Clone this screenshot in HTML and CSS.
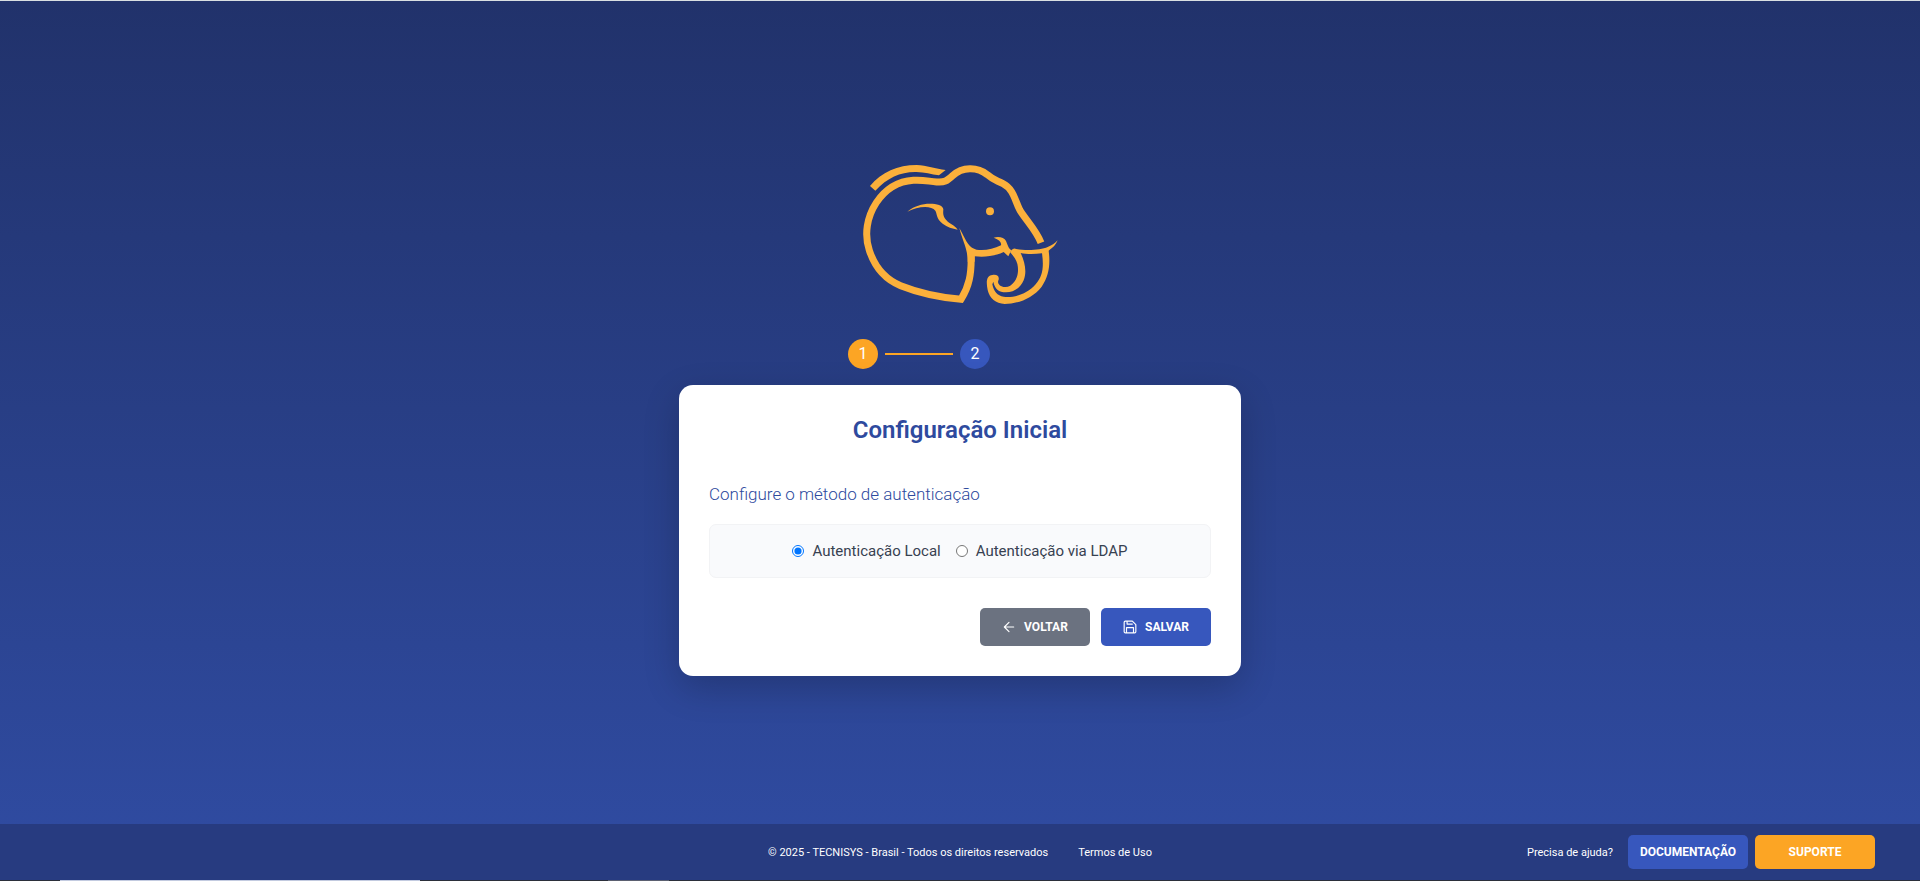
FILE: index.html
```
<!DOCTYPE html>
<html lang="pt-BR">
<head>
    <meta charset="UTF-8">
    <meta name="viewport" content="width=device-width, initial-scale=1.0">
    <title>Configuração Inicial</title>
    <link rel="stylesheet" href="styles.css">
</head>
<body>
    <main class="content">
        <svg class="logo" viewBox="0 0 660 510" role="img" aria-label="Tecnisys">
            <!-- Costas e corpo -->
            <path class="line" d="M573 278 C558 240 530 213 510 181 C495 154 492 118 459 101 C437 90 430 90 412 74 C382 50 337 50 308 77 C291 93 283 98 260 96 C235 94 220 89 190 91 C145 94 106 118 79 158 C51 201 42 253 58 301 C75 353 103 387 152 407 C207 429 270 442 333 448 C356 411 366 375 363 305"/>
            <path class="fill" d="M60 108 C95 66 143 45 200 45 C230 46 257 57 287 60 L267 76 C242 73 222 65 195 66 C150 67 112 83 76 122Z"/>
            <!-- Orelha -->
            <path class="fill" d="M172 185 C192 168 216 161 240 161 C260 161 279 166 280 178 C279 190 279 200 288 209 C298 222 314 224 323 239 C307 235 292 232 278 221 C258 205 262 192 256 182 C244 165 203 168 172 185Z"/>
            <!-- Rosto -->
            <path class="fill" d="M328 234 C338 249 349 282 366 293 C388 307 424 299 453 286 C455 277 448 269 431 263 C446 259 463 262 468 273 C473 284 475 296 484 300 L475 319 L461 306 C430 320 400 322 374 319 L374 335 L353 335 C354 298 336 268 328 234Z"/>
            <circle class="fill" cx="420" cy="184" r="12"/>
            <!-- Presa e tromba -->
            <path class="fill" d="M480 306 C489 295 492 294 499 297 C530 303 574 300 593 291 C607 286 615 279 623 271 C616 287 607 294 596 302 C601 340 598 378 575 410 C548 445 502 462 464 462 C437 460 419 446 413 420 C408 396 409 377 427 375 C441 373 448 378 446 389 C440 398 449 411 465 411 C486 412 503 388 504 363 C505 341 498 328 488 316Z"/>
            <path class="hole" d="M512 309 C528 313 553 313 576 310 C582 352 578 379 557 403 C531 434 488 444 461 440 C442 438 431 423 427 403 L430 395 C434 416 446 427 468 427 C493 427 512 412 521 391 C532 363 523 333 512 309Z"/>
        </svg>

        <ol class="steps">
            <li class="step active"><span class="step-number">1</span></li>
            <li class="step"><span class="step-number">2</span></li>
        </ol>

        <form class="card">
            <h1 class="card-title">Configuração Inicial</h1>
            <h2 class="card-subtitle">Configure o método de autenticação</h2>

            <div class="auth-options">
                <input type="radio" id="authLocal" name="auth" value="local" checked>
                <label for="authLocal">Autenticação Local</label>
                <input type="radio" id="authLdap" name="auth" value="ldap">
                <label for="authLdap">Autenticação via LDAP</label>
            </div>

            <div class="actions">
                <button type="button" class="btn btn-secondary">
                    <svg class="icon" viewBox="0 0 24 24"><path d="M20 12H4M12 4l-8 8 8 8"/></svg>
                    VOLTAR
                </button>
                <button type="submit" class="btn btn-primary">
                    <svg class="icon" viewBox="0 0 24 24"><path d="M5 2h11l6 6v12a2 2 0 0 1-2 2H4a2 2 0 0 1-2-2V4a2 2 0 0 1 2-2zM6 22v-9h12v9M7 2v5h9"/></svg>
                    SALVAR
                </button>
            </div>
        </form>
    </main>

    <footer class="footer">
        <div class="footer-center">
            <span>© 2025 - TECNISYS - Brasil - Todos os direitos reservados</span>
            <a href="#">Termos de Uso</a>
        </div>
        <div class="footer-help">
            <span class="help-text">Precisa de ajuda?</span>
            <a href="#" class="footer-btn docs">DOCUMENTAÇÃO</a>
            <a href="#" class="footer-btn support">SUPORTE</a>
        </div>
    </footer>
    <div class="bottom-bar"></div>
</body>
</html>
```
FILE: styles.css
```
* {
    box-sizing: border-box;
}

body {
    margin: 0;
    min-height: 100vh;
    display: flex;
    flex-direction: column;
    font-family: Roboto, Arial, sans-serif;
    background: linear-gradient(#21326b, #304ca3);
    border-top: 1px solid #d9dfe2;
}

.content {
    flex: 1;
    display: flex;
    flex-direction: column;
    align-items: center;
    justify-content: center;
}

/* Logo */
.logo {
    width: 220px;
    height: 170px;
}

.logo .line {
    fill: none;
    stroke: #fbb03b;
    stroke-width: 21;
}

.logo .fill {
    fill: #fbb03b;
}

.logo .hole {
    fill: #253a7c;
}

/* Passos */
.steps {
    display: flex;
    list-style: none;
    margin: 19px 0 16px;
    padding: 0;
}

.step {
    display: flex;
    align-items: center;
    gap: 7px;
    width: 112px;
}

.step-number {
    width: 30px;
    height: 30px;
    border-radius: 50%;
    background-color: #3757bd;
    color: #fff;
    font-size: 16px;
    line-height: 30px;
    text-align: center;
}

.step.active .step-number {
    background-color: #fca524;
}

.step.active::after {
    content: "";
    width: 68px;
    height: 2px;
    background-color: #fca524;
}

/* Card */
.card {
    width: 562px;
    max-width: 100%;
    padding: 30px;
    border-radius: 14px;
    background-color: #fff;
    box-shadow: 0 12px 36px rgba(0, 0, 0, 0.2);
}

.card-title {
    margin: 0 0 36px;
    color: #2e4a9e;
    font-size: 24px;
    line-height: 30px;
    font-weight: 600;
    text-align: center;
}

.card-subtitle {
    margin: 0 0 16px;
    color: #2e4a9e;
    font-size: 17px;
    line-height: 27px;
    font-weight: 300;
}

.auth-options {
    display: flex;
    align-items: center;
    justify-content: center;
    height: 54px;
    border: 1px solid #f2f3f5;
    border-radius: 7px;
    background-color: #f9fafc;
    color: #374151;
    font-size: 15px;
}

.auth-options input {
    width: 12px;
    height: 12px;
    margin: 0 8px 0 0;
}

.auth-options label + input {
    margin-left: 15px;
}

.actions {
    display: flex;
    justify-content: flex-end;
    gap: 11px;
    margin-top: 30px;
}

.btn {
    display: flex;
    align-items: center;
    justify-content: center;
    gap: 8px;
    width: 110px;
    height: 38px;
    padding: 0;
    border: none;
    border-radius: 5px;
    color: #fff;
    font-family: inherit;
    font-size: 12px;
    font-weight: 700;
    cursor: pointer;
}

.btn-secondary {
    background-color: #6b7280;
}

.btn-primary {
    background-color: #3757bd;
}

.icon {
    width: 14px;
    height: 14px;
    fill: none;
    stroke: currentColor;
    stroke-width: 2;
    stroke-linecap: round;
    stroke-linejoin: round;
}

/* Rodapé */
.footer {
    display: grid;
    grid-template-columns: 1fr auto 1fr;
    align-items: center;
    height: 56px;
    padding: 0 45px;
    background-color: #273b80;
    color: #fff;
    font-size: 11px;
}

.footer a {
    color: #fff;
    text-decoration: none;
}

.footer-center {
    grid-column: 2;
    display: flex;
    gap: 30px;
}

.footer-help {
    display: flex;
    align-items: center;
    justify-content: flex-end;
    gap: 7px;
}

.help-text {
    margin-right: 8px;
}

.footer-btn {
    width: 120px;
    border-radius: 5px;
    font-size: 12px;
    line-height: 34px;
    font-weight: 700;
    text-align: center;
}

.docs {
    background-color: #3757bd;
}

.support {
    background-color: #fca524;
}

.bottom-bar {
    height: 1px;
    background: linear-gradient(to right, #2b2f3a 60px, #c3cbe0 60px, #c3cbe0 420px, #2b2f3a 420px, #2b2f3a 608px, #5b6070 608px, #5b6070 669px, #2b2f3a 669px);
}
```
